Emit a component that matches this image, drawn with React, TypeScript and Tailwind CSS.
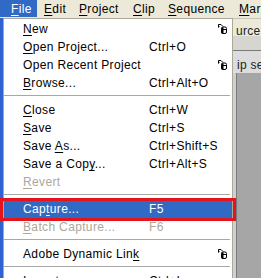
import React from "react";

const U = ({ children }: { children: React.ReactNode }) => (
  <span className="underline decoration-1 underline-offset-[2px]">{children}</span>
);

const SubIcon = () => (
  <svg width="9" height="11" viewBox="0 0 9 11" className="block">
    <path d="M0.5 4 L0.5 1.5 L3 1.5 L5 3.5" stroke="#000" strokeWidth="1" fill="none" />
    <path d="M0 3 L0.5 4.5 L1.5 3" stroke="#000" strokeWidth="0.8" fill="none" />
    <rect x="3.5" y="4" width="5" height="6.5" rx="1.5" fill="#fff" stroke="#000" strokeWidth="1" />
    <rect x="3.5" y="4.5" width="2" height="6" fill="#000" />
    <path d="M3.5 6.5 H8.5" stroke="#000" strokeWidth="1" />
  </svg>
);

type Item =
  | { sep: true }
  | {
      sep?: false;
      label: React.ReactNode;
      sc?: string;
      sub?: boolean;
      disabled?: boolean;
      active?: boolean;
    };

const items: Item[] = [
  { label: (<><U>N</U>ew</>), sub: true },
  { label: (<><U>O</U>pen Project...</>), sc: "Ctrl+O" },
  { label: <>Open Recent Project</>, sub: true },
  { label: (<><U>B</U>rowse...</>), sc: "Ctrl+Alt+O" },
  { sep: true },
  { label: (<><U>C</U>lose</>), sc: "Ctrl+W" },
  { label: (<><U>S</U>ave</>), sc: "Ctrl+S" },
  { label: (<>Save <U>A</U>s...</>), sc: "Ctrl+Shift+S" },
  { label: (<>Save a Cop<U>y</U>...</>), sc: "Ctrl+Alt+S" },
  { label: (<><U>R</U>evert</>), disabled: true },
  { sep: true },
  { label: (<>Cap<U>t</U>ure...</>), sc: "F5", active: true },
  { label: (<><U>B</U>atch Capture...</>), sc: "F6", disabled: true },
  { sep: true },
  { label: (<>Adobe Dynamic Lin<U>k</U></>), sub: true },
  { sep: true },
  { label: (<><U>I</U>mport...</>), sc: "Ctrl+I" },
];

export default function App() {
  const font = { fontFamily: '"Liberation Sans", Arial, sans-serif' };
  return (
    <div
      className="relative w-[261px] h-[278px] overflow-hidden bg-[#a6a6a6] text-[12px] tracking-[0.35px] text-black flex flex-col"
      style={font}
    >
      {/* menu bar */}
      <div className="h-[18px] shrink-0 bg-[#ece9d8] flex items-start whitespace-nowrap">
        <div className="w-[37px] shrink-0 h-[17px] bg-[#316ac5] text-white pl-[11px] flex items-center">
          <U>F</U>ile
        </div>
        <div className="ml-[7px] h-[17px] flex items-center">
          <span className="w-[35px] shrink-0"><U>E</U>dit</span>
          <span className="w-[54px] shrink-0"><U>P</U>roject</span>
          <span className="w-[35px] shrink-0"><U>C</U>lip</span>
          <span className="w-[71px] shrink-0"><U>S</U>equence</span>
          <span className="shrink-0"><U>M</U>arker</span>
        </div>
      </div>

      {/* body */}
      <div className="flex flex-1 min-h-0">
        <div className="w-[3px] bg-[#2f63d0] shrink-0" />
        {/* menu panel */}
        <div className="w-[230px] shrink-0 bg-white border border-[#aca899] border-b-0 pt-[1px] flex flex-col">
          {items.map((it, i) =>
            it.sep ? (
              <div key={i} className="h-[9px] shrink-0 pt-[3px] pr-[2px]">
                <div className="h-px bg-[#a7a7a7]" />
              </div>
            ) : (
              <div
                key={i}
                className={
                  "h-[18px] shrink-0 flex items-center pl-[19px] pr-[5px] whitespace-nowrap " +
                  (it.active ? "bg-[#316ac5] text-white " : "") +
                  (it.disabled ? "text-[#aca899] " : "")
                }
              >
                <span className="w-[126px] shrink-0">{it.label}</span>
                <span>{it.sc}</span>
                {it.sub && (
                  <span className="ml-auto mt-[-2px]">
                    <SubIcon />
                  </span>
                )}
              </div>
            )
          )}
        </div>
        {/* right background */}
        <div className="flex-1 flex flex-col text-[12px] tracking-[0.3px] whitespace-nowrap">
          <div className="h-[18px] bg-[#ece9d8] border-t border-[#c8c5b8] pl-[3px] pt-[6px] leading-none text-[#222]">
            urce: monitor
          </div>
          <div className="h-[14px] bg-[#d6d5d0]" />
          <div className="h-px bg-[#7a7a7a]" />
          <div className="h-[22px] bg-[#dcdcdc] pl-[4px] pt-[8px] leading-none text-[#222]">
            ip selected
          </div>
          <div className="flex-1 flex">
            <div className="w-[3px] bg-[#d0d0d0]" />
            <div className="w-px bg-[#7a7a7a]" />
            <div className="flex-1 bg-[#a6a6a6]" />
          </div>
        </div>
      </div>

      {/* red annotation box */}
      <div className="absolute left-0 top-[198px] w-[236px] h-[23px] border-[3px] border-[#e3141c] pointer-events-none" />
    </div>
  );
}
